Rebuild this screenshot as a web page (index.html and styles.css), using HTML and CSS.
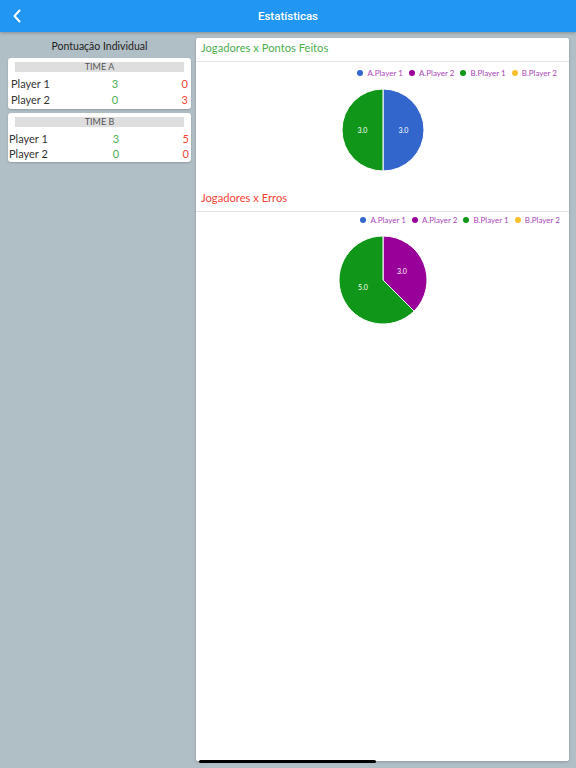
FILE: index.html
```html
<!DOCTYPE html>
<html lang="pt">
<head>
<meta charset="utf-8">
<title>Estatísticas</title>
<link rel="stylesheet" href="styles.css">
</head>
<body>
<header class="topbar">
  <svg class="back" width="10" height="14" viewBox="0 0 10 14"><path d="M7.5 1.5 L2.5 7 L7.5 12.5" fill="none" stroke="#fff" stroke-width="2" stroke-linecap="round" stroke-linejoin="round"/></svg>
  <h1 class="topbar-title">Estatísticas</h1>
</header>
<main class="main">
  <section class="side">
    <h2 class="side-title">Pontuação Individual</h2>
    <div class="team-card">
      <div class="team-name">TIME A</div>
      <div class="row"><span class="name">Player 1</span><span class="pts">3</span><span class="err">0</span></div>
      <div class="row"><span class="name">Player 2</span><span class="pts">0</span><span class="err">3</span></div>
    </div>
    <div class="team-card team-card--b">
      <div class="team-name">TIME B</div>
      <div class="row"><span class="name">Player 1</span><span class="pts">3</span><span class="err">5</span></div>
      <div class="row"><span class="name">Player 2</span><span class="pts">0</span><span class="err">0</span></div>
    </div>
  </section>
  <section class="charts">
    <h3 class="chart-title chart-title--green">Jogadores x Pontos Feitos</h3>
    <div class="chart chart--one">
      <ul class="legend">
        <li><i class="dot dot-blue"></i>A.Player 1</li>
        <li><i class="dot dot-purple"></i>A.Player 2</li>
        <li><i class="dot dot-green"></i>B.Player 1</li>
        <li><i class="dot dot-yellow"></i>B.Player 2</li>
      </ul>
      <svg class="pie" width="84" height="84" viewBox="0 0 84 84">
        <path d="M42 42 L42 1 A41 41 0 0 1 42 83 Z" fill="#3366cc" stroke="#fff" stroke-width="1"/>
        <path d="M42 42 L42 83 A41 41 0 0 1 42 1 Z" fill="#109618" stroke="#fff" stroke-width="1"/>
        <text x="62.5" y="44.5" class="pie-label">3.0</text>
        <text x="21.5" y="44.5" class="pie-label">3.0</text>
      </svg>
    </div>
    <h3 class="chart-title chart-title--red">Jogadores x Erros</h3>
    <div class="chart chart--two">
      <ul class="legend">
        <li><i class="dot dot-blue"></i>A.Player 1</li>
        <li><i class="dot dot-purple"></i>A.Player 2</li>
        <li><i class="dot dot-green"></i>B.Player 1</li>
        <li><i class="dot dot-yellow"></i>B.Player 2</li>
      </ul>
      <svg class="pie" width="90" height="90" viewBox="0 0 90 90">
        <path d="M45 45 L45 1 A44 44 0 0 1 76.11 76.11 Z" fill="#990099" stroke="#fff" stroke-width="1"/>
        <path d="M45 45 L76.11 76.11 A44 44 0 1 1 45 1 Z" fill="#109618" stroke="#fff" stroke-width="1"/>
        <text x="64" y="38.5" class="pie-label">3.0</text>
        <text x="25" y="54.5" class="pie-label">5.0</text>
      </svg>
    </div>
  </section>
</main>
<div class="scroll-indicator"></div>
</body>
</html>
```
FILE: styles.css
```css
* { box-sizing: border-box; }
html, body { margin: 0; padding: 0; }
body {
  width: 576px;
  height: 768px;
  overflow: hidden;
  background: #b0bec5;
  font-family: "Lato", "Open Sans", sans-serif;
  color: #222;
  position: relative;
}
.topbar {
  height: 32px;
  background: #2196f3;
  display: flex;
  align-items: center;
  justify-content: center;
  position: relative;
  box-shadow: 0 1px 3px rgba(0,0,0,0.25);
}
.back {
  position: absolute;
  left: 12px;
  top: 9px;
}
.topbar-title {
  margin: 0;
  font-family: "Roboto", sans-serif;
  font-weight: 500;
  font-size: 11.5px;
  color: #fff;
}
.main {
  display: flex;
  gap: 5px;
  height: 736px;
  padding: 6px 7px 7px 8px;
}
.side {
  width: 183px;
  align-self: flex-start;
}
.side-title {
  margin: 0 0 4px;
  font-size: 10.5px;
  font-weight: 400;
  line-height: 16px;
  text-align: center;
  color: #222;
}
.team-card {
  background: #fff;
  border-radius: 3px;
  box-shadow: 0 1px 2px rgba(0,0,0,0.18);
  padding: 4px 0 1px;
  margin-bottom: 4px;
}
.team-name {
  margin: 0 7px 4px;
  height: 10px;
  line-height: 10px;
  background: #dedede;
  color: #555;
  font-size: 9px;
  text-align: center;
}
.row {
  display: grid;
  grid-template-columns: 1fr 20px 63px;
  height: 16px;
  line-height: 16px;
  font-size: 11px;
  padding: 0 3px;
  color: #333;
}
.team-card--b .row { height: 15px; line-height: 15px; padding: 0 2px 0 1px; }
.pts { color: #4caf50; text-align: center; }
.err { color: #f44336; text-align: right; }
.charts {
  flex: 1;
  background: #fff;
  border-radius: 2px;
  box-shadow: 0 1px 3px rgba(0,0,0,0.2);
  display: flex;
  flex-direction: column;
}
.chart-title {
  margin: 0;
  padding: 4px 5px 7px;
  font-size: 11.2px;
  line-height: 12px;
  font-weight: 400;
  border-bottom: 1px solid #e3e3e3;
}
.chart-title--green { color: #4caf50; }
.chart-title--red { color: #f44336; }
.chart {
  display: flex;
  flex-direction: column;
  align-items: center;
}
.chart--one { padding: 6px 12px 16px 0; }
.chart--two { padding: 3px 9px 0 0; }
.legend {
  list-style: none;
  margin: 0;
  padding: 0;
  align-self: flex-end;
  display: flex;
  gap: 6px;
  font-size: 8px;
  line-height: 10px;
  color: #ab47bc;
}
.legend li { display: flex; align-items: center; gap: 4px; }
.dot {
  width: 6px;
  height: 6px;
  border-radius: 50%;
  display: inline-block;
}
.dot-blue { background: #3366cc; }
.dot-purple { background: #990099; }
.dot-green { background: #109618; }
.dot-yellow { background: #fbc02d; }
.pie { display: block; margin-top: 10px; }
.chart--one .pie { margin-left: 12px; }
.chart--two .pie { margin-left: 10px; }
.pie-label {
  fill: #fff;
  font-family: "Lato", sans-serif;
  font-size: 7px;
  text-anchor: middle;
}
.scroll-indicator {
  position: absolute;
  left: 199px;
  top: 760px;
  width: 177px;
  height: 3px;
  border-radius: 2px;
  background: #000;
}
```
